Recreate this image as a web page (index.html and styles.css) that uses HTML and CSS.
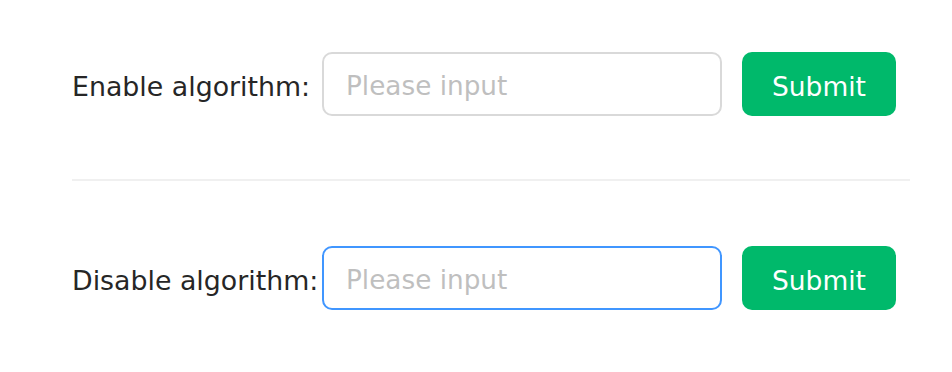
FILE: index.html
```html
<!DOCTYPE html>
<html>
<head>
<meta charset="utf-8">
<link rel="stylesheet" href="styles.css">
</head>
<body>
<div class="page">
  <div class="row">
    <label class="label">Enable algorithm:</label>
    <input class="field" type="text" placeholder="Please input">
    <button class="btn">Submit</button>
  </div>
  <div class="divider"></div>
  <div class="row">
    <label class="label">Disable algorithm:</label>
    <input class="field focused" type="text" placeholder="Please input">
    <button class="btn">Submit</button>
  </div>
</div>
</body>
</html>
```
FILE: styles.css
```css
html, body {
  margin: 0;
  padding: 0;
  background: #ffffff;
}
body {
  font-family: "DejaVu Sans", "Noto Sans", sans-serif;
}
.page {
  padding: 52px 42px 0 72px;
  display: flex;
  flex-direction: column;
}
.row {
  display: flex;
  align-items: center;
  height: 64px;
}
.label {
  width: 250px;
  flex: none;
  font-size: 26.8px;
  color: #262626;
  white-space: nowrap;
  padding-top: 4px;
}
.field {
  box-sizing: border-box;
  width: 400px;
  height: 64px;
  border: 2px solid #d9d9d9;
  border-radius: 10px;
  padding: 4px 22px 0 22px;
  font-family: inherit;
  font-size: 26.3px;
  color: #262626;
  outline: none;
  background: #fff;
}
.field::placeholder {
  color: #bfbfbf;
}
.field.focused {
  border-color: #4096ff;
}
.btn {
  box-sizing: border-box;
  margin-left: 20px;
  width: 154px;
  height: 64px;
  border: none;
  border-radius: 10px;
  padding: 4px 0 0 0;
  background: #00b96b;
  color: #ffffff;
  font-family: inherit;
  font-size: 26.5px;
  cursor: pointer;
}
.divider {
  height: 2px;
  background: #f0f0f0;
  margin: 63px 0 65px 0;
}
```
